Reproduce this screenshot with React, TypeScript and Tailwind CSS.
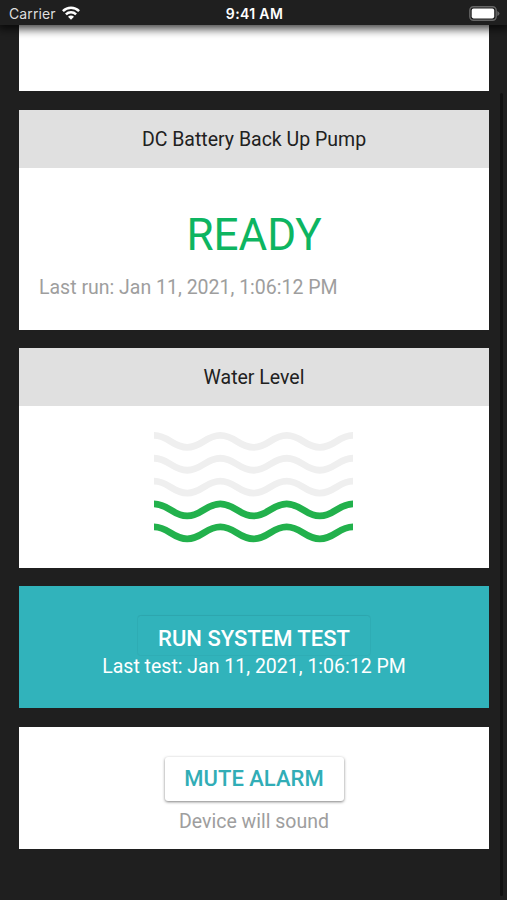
import type { ReactNode } from 'react';

const WAVE_PATH =
  'M0 0 C14.5 0 18.67 12 33.17 12 S51.83 0 66.33 0 S85 12 99.5 12 S118.17 0 132.67 0 S151.33 12 165.83 12 S184.5 0 199 0';

const levels = [false, false, false, true, true];

function StatusBar() {
  return (
    <header className="relative z-10 flex h-[25px] items-center justify-between bg-[#1f1f1f] pr-[7px] pl-[9px] font-['Inter',sans-serif] text-white shadow-[0_2px_10px_2px_rgba(0,0,0,0.75)]">
      <div className="flex w-[100px] items-center gap-[6px] pt-[2px]">
        <span className="text-[14px] leading-none tracking-[0.1px] text-[#dedede]">Carrier</span>
        <svg className="-mt-[2px]" width="18" height="14" viewBox="0 0 18 14" fill="none" stroke="white" strokeWidth="2.5">
          <path d="M0.9 5.2 C5.5 0.7 12.5 0.7 17.1 5.2" />
          <path d="M3.9 8.3 C6.8 5.5 11.2 5.5 14.1 8.3" />
          <path d="M9 13.8 L6 10.7 C7.7 9.2 10.3 9.2 12 10.7 Z" fill="white" stroke="none" />
        </svg>
      </div>
      <span className="pt-[3px] text-[14px] leading-none font-semibold tracking-[0.35px]">9:41 AM</span>
      <div className="flex w-[100px] justify-end pt-[1px]">
        <svg width="31" height="15" viewBox="0 0 31 15">
          <rect x="0.8" y="0.8" width="26.4" height="13.4" rx="3.6" fill="#1f1f1f" stroke="#666" strokeWidth="1.4" />
          <rect x="2.7" y="2.6" width="22.5" height="9.8" rx="1.8" fill="white" />
          <path d="M28.3 5 Q30.5 6 30.5 7.5 Q30.5 9 28.3 10 Z" fill="#666" />
        </svg>
      </div>
    </header>
  );
}

function Card({ title, children }: { title: string; children: ReactNode }) {
  return (
    <section className="flex h-[220px] flex-col bg-white">
      <h2 className="flex h-[58px] shrink-0 items-center justify-center bg-[#e0e0e0] pt-[1.5px] text-[19.5px] text-[#212121]">
        {title}
      </h2>
      {children}
    </section>
  );
}

function WaterLevel() {
  return (
    <svg className="mt-[24px] ml-[134.5px]" width="199" height="116" viewBox="0 0 199 116" fill="none" strokeWidth="6.8">
      {levels.map((active, i) => (
        <path
          key={i}
          d={WAVE_PATH}
          transform={`translate(0 ${5.4 + i * 22.85})`}
          stroke={active ? '#22b14c' : '#efefef'}
        />
      ))}
    </svg>
  );
}

export default function App() {
  return (
    <div className="relative h-[900px] w-[507px] overflow-hidden bg-[#1f1f1f] font-['Roboto',sans-serif]">
      <StatusBar />
      <main className="flex flex-col gap-[18.4px] pr-[18px] pl-[19px]">
        <section className="h-[66.2px] bg-white" />

        <Card title="DC Battery Back Up Pump">
          <div className="pt-[41px] text-center text-[44px] leading-[52px] text-[#0db561]">READY</div>
          <p className="mt-[15px] pl-5 text-[19.5px] leading-6 text-[#9e9e9e]">Last run: Jan 11, 2021, 1:06:12 PM</p>
        </Card>

        <Card title="Water Level">
          <WaterLevel />
        </Card>

        <section className="flex h-[122px] flex-col items-center bg-[#31b3bb] pt-[30px] text-white">
          <button className="h-[39px] w-[232px] rounded-[3px] pt-[6px] text-[22px] leading-[32px] font-medium shadow-[0_-1px_1px_0_rgba(0,0,0,0.04),0_0_1px_1px_rgba(0,0,0,0.035)]">
            RUN SYSTEM TEST
          </button>
          <p className="text-[19.5px] leading-6">Last test: Jan 11, 2021, 1:06:12 PM</p>
        </section>

        <section className="flex h-[122px] flex-col items-center bg-white pt-[30px]">
          <button className="h-[44px] w-[179px] rounded-[3px] bg-white text-[22px] font-medium text-[#31adb6] shadow-[0_1px_3px_rgba(0,0,0,0.5)]">
            MUTE ALARM
          </button>
          <p className="mt-[9px] text-[19.5px] leading-6 text-[#9e9e9e]">Device will sound</p>
        </section>
      </main>
      <div className="absolute top-[93px] right-[4px] h-[803px] w-[3px] rounded-full bg-[#111]" />
    </div>
  );
}
